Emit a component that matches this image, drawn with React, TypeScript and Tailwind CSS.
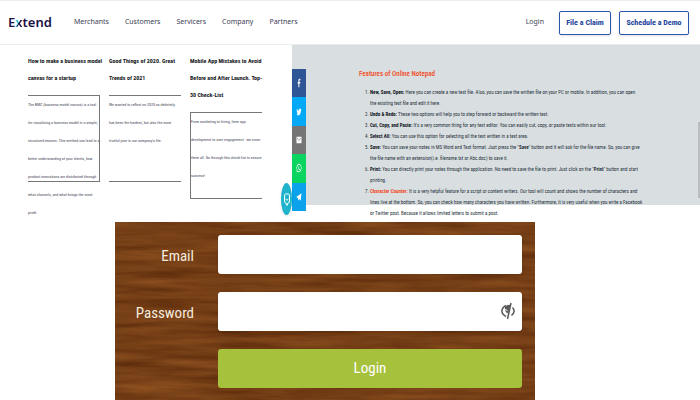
import type { ReactNode } from "react";

const condensed = "font-['Roboto_Condensed','Roboto',sans-serif]";

const navLinks = ["Merchants", "Customers", "Servicers", "Company", "Partners"];

function Header() {
  return (
    <header className="flex h-[45px] items-center border-y border-[#ececec] pr-[11px] pl-2 font-['Noto_Sans',sans-serif] text-[#3c4257]">
      <a href="#home" className="w-[66px] text-[13px] font-semibold text-[#1b1145]">
        E<span className="bg-linear-to-br from-[#21b8d6] from-50% to-[#1b1145] to-50% bg-clip-text text-transparent">x</span>tend
      </a>
      <nav className="flex flex-1 gap-4 text-[7px]">
        {navLinks.map((label) => (
          <a key={label} href={"#" + label.toLowerCase()}>
            {label}
          </a>
        ))}
      </nav>
      <a href="#login" className="mr-[15px] text-[7px]">Login</a>
      <div className={`flex gap-2 text-[8px] font-bold text-[#1b419c] ${condensed}`}>
        <button className="h-6 w-[52px] rounded-xs border border-[#2c55ae] bg-white shadow-sm">File a Claim</button>
        <button className="h-6 w-[70px] rounded-xs border border-[#2c55ae] bg-white shadow-sm">Schedule a Demo</button>
      </div>
    </header>
  );
}

const cards = [
  {
    title: ["How to make a business model", "canvas for a startup"],
    frame: "border-y border-r",
    lines: [
      "The BMC (business model canvas) is a tool",
      "for visualizing a business model in a simple,",
      "structured manner. This method can lead to a",
      "better understanding of your clients, how",
      "product innovations are distributed through",
      "what channels, and what brings the most",
      "profit.",
    ],
  },
  {
    title: ["Good Things of 2020. Great", "Trends of 2021"],
    frame: "border-y",
    lines: [
      "We wanted to reflect on 2020 as definitely",
      "has been the hardest, but also the most",
      "fruitful year in our company's life.",
    ],
  },
  {
    title: ["Mobile App Mistakes to Avoid", "Before and After Launch. Top-", "30 Check-List"],
    frame: "border-y border-l",
    lines: [
      "From marketing to hiring, from app",
      "development to user engagement - we cover",
      "them all. Go through this check-list to ensure",
      "success!",
    ],
  },
];

function Articles() {
  return (
    <section className={`grid w-[292px] grid-cols-3 gap-x-[9px] pt-[7px] pr-[30px] pl-7 whitespace-nowrap ${condensed}`}>
      {cards.map((card) => (
        <article key={card.title[0]} className="min-w-0">
          <h2 className="text-[6px] leading-[17px] font-bold text-[#15171c]">
            {card.title.map((line) => (
              <span key={line} className="block">{line}</span>
            ))}
          </h2>
          <div className={`mt-[9px] h-[87px] border-[#777] text-[4px] leading-[18px] text-[#3f4556] ${card.frame}`}>
            {card.lines.map((line) => (
              <p key={line}>{line}</p>
            ))}
          </div>
        </article>
      ))}
    </section>
  );
}

const shares = [
  { label: "Facebook", bg: "bg-[#2f5597]", d: "M9.5 22V13H6.5V9.5H9.5V7C9.5 3.8 11.3 2 14.3 2H17.5V5.5H15.3C13.8 5.5 13.5 6.2 13.5 7.5V9.5H17.4L16.9 13H13.5V22Z" },
  { label: "Twitter", bg: "bg-[#03a9f4]", d: "M22 5.5c-.7.4-1.5.6-2.4.7.9-.5 1.5-1.3 1.8-2.3-.8.5-1.7.8-2.6 1a4.1 4.1 0 0 0-7 3.8A11.7 11.7 0 0 1 3.300 4.300a4.100 4.100 0 0 0 1.300 5.500c-.7 0-1.300-.2-1.900-.5 0 2 1.400 3.700 3.300 4.100-.6.2-1.200.2-1.900.1.500 1.600 2 2.800 3.900 2.800A8.300 8.300 0 0 1 2 18a11.600 11.600 0 0 0 18-10.400c.8-.6 1.500-1.300 2-2.100z" },
  { label: "Email", bg: "bg-[#757575]", d: "M2 4H22V20H2ZM4 6V7.500L12 14L20 7.500V6L12 12Z" },
  { label: "WhatsApp", bg: "bg-[#0bd561]", d: "M12 2A10 10 0 0 0 3.500 17.200L2 22L7 20.600A10 10 0 1 0 12 2ZM12 4A8 8 0 1 1 7.200 18.400L4.800 19.200L5.600 16.800A8 8 0 0 1 12 4ZM8.500 7C7 8 7 10 8.500 12.500C10.500 15.500 13 17.500 15.500 17C17 16.600 17.600 15.200 17 14.500L14.800 13.300L13.500 14.800C11.500 14 10 12.500 9.300 11L10.500 9.500L9.600 7Z" },
  { label: "Telegram", bg: "bg-[#0aa2ea]", d: "M1 12L22 3L18.500 21L12.500 17L9.500 21L8 15Z" },
];

function ShareBar() {
  return (
    <div className="relative mt-6 flex h-[142px] w-[14px] shrink-0 flex-col">
      {shares.map((s) => (
        <a key={s.label} href={"#" + s.label.toLowerCase()} aria-label={s.label} className={`flex flex-1 items-center justify-center ${s.bg}`}>
          <svg viewBox="0 0 24 24" preserveAspectRatio="none" className="h-[10px] w-[6px]" fill="white" fillRule="evenodd">
            <path d={s.d} />
          </svg>
        </a>
      ))}
      <button aria-label="Chat" className="absolute -bottom-1 -left-[11px] flex h-8 w-[11px] items-center justify-center rounded-[50%] bg-[#1fb4cb] shadow">
        <svg viewBox="0 0 8 18" className="h-[18px] w-2" fill="none" stroke="white">
          <path d="M2.500 4Q1.500 4 1.500 6V11Q1.500 13 3 13L4 15.500L5 13Q6.500 13 6.500 11V6Q6.500 4 5.500 4ZM2.500 9Q4 11.500 5.500 9" />
        </svg>
      </button>
    </div>
  );
}

const features: { term: ReactNode; lines: ReactNode[] }[] = [
  { term: "New, Save, Open:", lines: ["Here you can create a new text file. Also, you can save the written file on your PC or mobile. In addition, you can open", "the existing text file and edit it here."] },
  { term: "Undo & Redo:", lines: ["These two options will help you to step forward or backward the written text."] },
  { term: "Cut, Copy, and Paste:", lines: ["It's a very common thing for any text editor. You can easily cut, copy, or paste texts within our tool."] },
  { term: "Select All:", lines: ["You can use this option for selecting all the text written in a text area."] },
  { term: "Save:", lines: [<>You can save your notes in MS Word and Text format. Just press the "<b>Save</b>" button and it will ask for the file name. So, you can give</>, "the file name with an extension(i.e. filename.txt or Abc.doc) to save it."] },
  { term: "Print:", lines: [<>You can directly print your notes through the application. No need to save the file to print. Just click on the "<b>Print</b>" button and start</>, "printing."] },
  { term: <span className="text-[#f04a24]">Character Counter:</span>, lines: ["It is a very helpful feature for a script or content writers. Our tool will count and shows the number of characters and", "lines live at the bottom. So, you can check how many characters you have written. Furthermore, it is very useful when you write a Facebook", "or Twitter post. Because it allows limited letters to submit a post."] },
];

function Features() {
  return (
    <section className={`min-w-0 flex-1 pt-[22px] pl-[53px] whitespace-nowrap ${condensed}`}>
      <h2 className="text-[7px] leading-[14px] font-medium text-[#f04a24]">Features of Online Notepad</h2>
      <ol className="mt-[6px] list-decimal pl-[11px] text-[5px] leading-[11px] text-[#27323c]">
        {features.map((f, i) => (
          <li key={i}>
            <b className="text-[#10171d]">{f.term}</b>{" "}
            {f.lines.map((line, n) => (
              <span key={n}>
                {n > 0 && <br />}
                {line}
              </span>
            ))}
          </li>
        ))}
      </ol>
    </section>
  );
}

function Wood() {
  return (
    <svg className="absolute inset-0 h-full w-full" aria-hidden="true">
      <filter id="grain" x="0" y="0" width="100%" height="100%" colorInterpolationFilters="sRGB">
        <feTurbulence type="fractalNoise" baseFrequency="0.012 0.13" numOctaves="5" seed="21" />
        <feColorMatrix values="0.24 0 0 0 0.34  0.18 0 0 0 0.155  0.1 0 0 0 0.035  0 0 0 0 1" />
      </filter>
      <rect width="100%" height="100%" fill="#753c15" />
      <rect width="100%" height="100%" filter="url(#grain)" />
    </svg>
  );
}

function LoginForm() {
  const label = "pt-1 pr-6 text-right text-[15px] text-[#f5ebdf]";
  const field = "h-[39px] w-full rounded-[3px] bg-white px-3 text-[15px] text-gray-800 shadow-sm";
  return (
    <form className={`relative ml-[115px] h-[178px] w-3/5 ${condensed}`} onSubmit={(e) => e.preventDefault()}>
      <Wood />
      <div className="relative grid grid-cols-[103px_1fr] items-center gap-y-[18px] pt-[13px] pr-[13px]">
        <label htmlFor="email" className={label}>Email</label>
        <input id="email" type="email" className={field} />
        <label htmlFor="password" className={label}>Password</label>
        <div className="relative">
          <input id="password" type="password" className={field} />
          <button type="button" aria-label="Show password" className="absolute top-[10px] right-[7px]">
            <svg viewBox="0 0 14 18" className="h-[18px] w-[14px]" fill="none" stroke="#5a5a5a" strokeWidth="1.500">
              <path d="M5 14.500C-0.500 11.500 -0.500 6.500 5 3.500" />
              <path d="M11.500 5.500C13.800 8 13.800 10.500 10.500 13.500" />
              <path d="M4 5Q6.500 2 9.500 3L7.500 10L6 11.500Q3.500 9 4 5Z" fill="#5a5a5a" stroke="none" />
              <path d="M10 1L6.500 17" />
              <path d="M4.500 7Q5 8.500 6.500 8.500" stroke="white" strokeWidth="1" />
            </svg>
          </button>
        </div>
        <button type="submit" className="col-start-2 h-[39px] rounded-[3px] bg-[#a6c13c] text-[15px] text-white">Login</button>
      </div>
    </form>
  );
}

export default function App() {
  return (
    <div className="bg-white">
      <Header />
      <main>
        <div className="flex h-[177px]">
          <Articles />
          <div className="flex h-40 min-w-0 flex-1 bg-[#d9dee1]">
            <ShareBar />
            <Features />
            <div className="mt-[77px] h-[76px] w-0.5 shrink-0 bg-[#b9bdbf]" />
          </div>
        </div>
        <LoginForm />
      </main>
    </div>
  );
}
